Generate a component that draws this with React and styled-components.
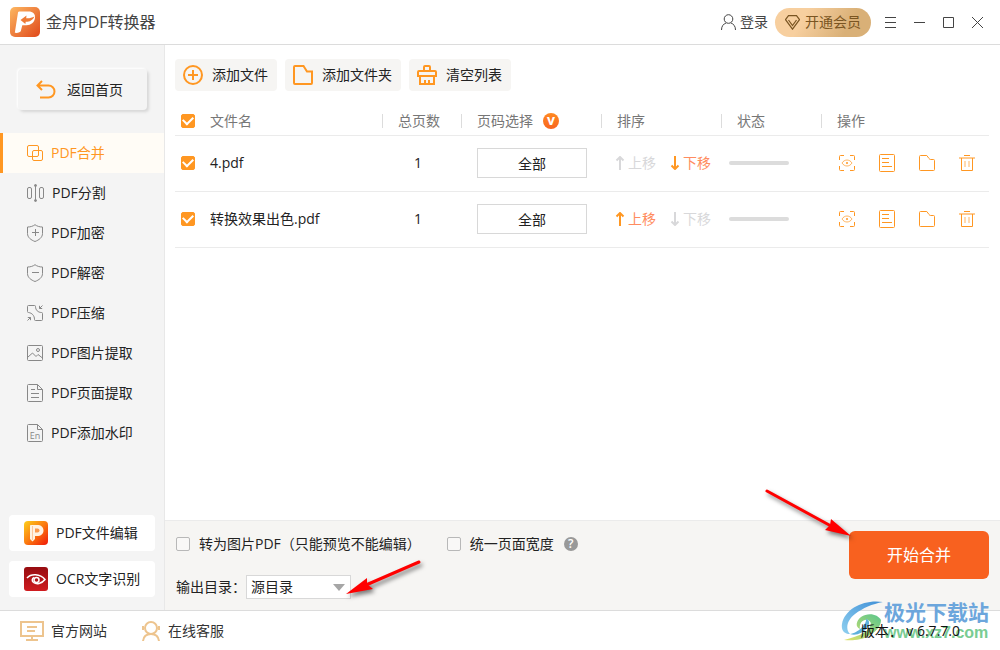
import React, { useState } from 'react';
import styled, { createGlobalStyle } from 'styled-components';

const GlobalStyle = createGlobalStyle`
  * {
    box-sizing: border-box;
  }

  body {
    margin: 0;
    background: #fff;
  }

  body, button, input, select {
    font-family: "Open Sans", "Noto Sans CJK SC", sans-serif;
    font-size: 14px;
    line-height: 20px;
    color: #222;
  }

  button {
    padding: 0;
    border: none;
    background: none;
    cursor: pointer;
  }

  svg {
    display: block;
    flex-shrink: 0;
  }
`;

const Window = styled.div`
  display: flex;
  flex-direction: column;
  min-height: 100vh;
`;

// Title bar

const TitleBar = styled.header`
  display: flex;
  align-items: center;
  height: 45px;
  padding: 0 17px 0 10px;
  border-bottom: 1px solid #dcdcdc;
`;

const AppTitle = styled.h1`
  flex: 1;
  margin: 0 0 0 6px;
  font-size: 16px;
  font-weight: 400;
  color: #444;
`;

const LoginButton = styled.button`
  display: flex;
  align-items: center;
  gap: 4px;
  color: #444;
`;

const VipButton = styled.button`
  display: flex;
  align-items: center;
  gap: 5px;
  height: 29px;
  margin: 0 14px 0 7px;
  padding: 0 10px;
  border-radius: 15px;
  background: linear-gradient(120deg, #f7cf9f 30%, #d9b077 75%);
  color: #7a5522;
`;

const WindowControls = styled.div`
  display: flex;
  gap: 18px;
  color: #444;
`;

const IconButton = styled.button`
  display: flex;
  color: inherit;
`;

// Sidebar

const Body = styled.div`
  display: flex;
  flex: 1;
`;

const Sidebar = styled.aside`
  display: flex;
  flex-direction: column;
  justify-content: space-between;
  width: 165px;
  padding-bottom: 13px;
  border-right: 1px solid #e8e8e8;
  background: #f4f4f4;
`;

const BackButton = styled.button`
  display: flex;
  align-items: center;
  gap: 11px;
  width: 129px;
  height: 41px;
  margin: 24px 0 23px 18px;
  padding-left: 18px;
  border-radius: 4px;
  background: #f4f4f4;
  box-shadow: -1px -1px 2px #fff, 2px 2px 3px #d6d6d6;

  svg {
    color: #ff9722;
  }
`;

const MenuItem = styled.button`
  display: flex;
  align-items: center;
  gap: 8px;
  width: 100%;
  height: 40px;
  padding-left: 24px;
  border-left: 3px solid ${({ $active }) => ($active ? '#ff9722' : 'transparent')};
  background: ${({ $active }) => ($active ? '#fffcf6' : 'transparent')};
  color: ${({ $active }) => ($active ? '#ff9722' : '#222')};

  svg {
    color: ${({ $active }) => ($active ? '#ff9722' : '#888')};
  }
`;

const ToolCards = styled.div`
  display: flex;
  flex-direction: column;
  gap: 10px;
  padding: 0 9px;
`;

const ToolCard = styled.button`
  display: flex;
  align-items: center;
  gap: 8px;
  height: 36px;
  padding-left: 15px;
  border-radius: 4px;
  background: #fff;
`;

// File list

const Main = styled.main`
  display: flex;
  flex: 1;
  flex-direction: column;
  min-width: 0;
`;

const FileArea = styled.section`
  flex: 1;
  padding: 14px 11px 0 10px;
`;

const Toolbar = styled.div`
  display: flex;
  gap: 8px;
  margin-bottom: 15px;
`;

const ToolbarButton = styled.button`
  display: flex;
  align-items: center;
  gap: 9px;
  height: 32px;
  padding: 0 9px 0 8px;
  border-radius: 4px;
  background: #f6f5f3;

  svg {
    color: #ff9722;
  }
`;

const FileTable = styled.table`
  width: 100%;
  table-layout: fixed;
  border-collapse: separate;
  border-spacing: 0;

  th, td {
    padding: 0;
    border-bottom: 1px solid #ebebeb;
    text-align: left;
    font-weight: 400;
  }

  th {
    height: 30px;
    color: #777;
  }

  td {
    height: 56px;
    padding-bottom: 2px;
  }
`;

const HeadLabel = styled.div`
  display: flex;
  align-items: center;
  gap: 10px;
  height: 14px;
  padding-left: 15px;
  border-left: 1px solid #dcdcdc;
`;

const VipBadge = styled.span`
  width: 16px;
  height: 16px;
  border-radius: 50%;
  background: linear-gradient(#ff8a22, #f8651f);
  color: #fff;
  font-size: 14px;
  font-weight: 700;
  line-height: 13px;
  text-align: center;
`;

const Checkbox = styled.input.attrs({ type: 'checkbox' })`
  display: grid;
  place-content: center;
  appearance: none;
  width: 14px;
  height: 14px;
  margin: 0;
  border: 1px solid #b8b8b8;
  border-radius: 2px;
  background: #f9f8f7;

  &:checked {
    border-color: #ff9722;
    background: #ff9722;
  }

  &:checked::after {
    content: '';
    width: 8px;
    height: 5px;
    border: solid #fff;
    border-width: 0 0 2px 2px;
    transform: translateY(-1px) rotate(-45deg);
  }
`;

const CheckCell = styled.div`
  padding-left: 6px;
`;

const PageCount = styled.td`
  && {
    padding-right: 7px;
    text-align: center;
  }
`;

const PageRange = styled.input`
  display: block;
  width: 110px;
  height: 30px;
  margin-left: 16px;
  padding: 0;
  border: 1px solid #d8d8d8;
  text-align: center;
`;

const SortButtons = styled.div`
  display: flex;
  gap: 14px;
  padding-left: 14px;
`;

const SortButton = styled.button`
  display: flex;
  align-items: center;
  gap: 3px;
  color: #ff8c60;

  svg {
    color: #ff9722;
  }

  &:disabled, &:disabled svg {
    color: #d8d8da;
    cursor: default;
  }
`;

const Progress = styled.div`
  width: 60px;
  height: 4px;
  margin-left: 8px;
  border-radius: 2px;
  background: #dcdcdc;
`;

const Actions = styled.div`
  display: flex;
  align-items: center;
  gap: 24px;
  padding-left: 18px;
  color: #ff9722;
`;

// Output settings

const OutputPanel = styled.section`
  display: flex;
  justify-content: space-between;
  padding: 10px 11px 11px;
  border-top: 1px solid #ebebeb;
  background: #f6f5f3;
`;

const Settings = styled.div`
  display: flex;
  flex-direction: column;
  gap: 18px;
`;

const SettingsRow = styled.div`
  display: flex;
  align-items: center;
  min-height: ${({ $height }) => $height}px;
`;

const CheckLabel = styled.label`
  display: flex;
  align-items: center;
  gap: 9px;
  margin-right: 26px;

  &:last-of-type {
    margin-right: 10px;
  }
`;

const HelpButton = styled.button`
  width: 14px;
  height: 14px;
  border-radius: 50%;
  background: #999;
  color: #fff;
  font-size: 12px;
  font-weight: 600;
  line-height: 14px;
`;

const SelectBox = styled.div`
  position: relative;
`;

const DirSelect = styled.select`
  display: block;
  appearance: none;
  width: 105px;
  height: 24px;
  padding: 0 20px 0 4px;
  border: 1px solid #d8d8d8;
  border-radius: 0;
  background: #fff;
`;

const SelectArrow = styled.svg`
  position: absolute;
  top: 9px;
  right: 6px;
  pointer-events: none;
`;

const StartBox = styled.div`
  position: relative;
`;

const StartButton = styled.button`
  width: 140px;
  height: 48px;
  border-radius: 6px;
  background: #f8611f;
  color: #fff;
  font-size: 16px;
`;

const Pointer = styled.svg`
  position: absolute;
  top: ${({ $top }) => $top}px;
  left: ${({ $left }) => $left}px;
  overflow: visible;
  pointer-events: none;
  filter: drop-shadow(2px 3px 2px rgba(0, 0, 0, 0.5));
`;

// Status bar

const StatusBar = styled.footer`
  position: relative;
  display: flex;
  align-items: center;
  height: 40px;
  padding: 0 40px 0 20px;
  border-top: 1px solid #dcdcdc;
`;

const FooterLink = styled.a`
  display: flex;
  align-items: center;
  gap: 7px;
  margin-right: 34px;
  color: #333;
  text-decoration: none;
`;

const Version = styled.span`
  position: relative;
  margin-left: auto;
  color: #111;
`;

const SiteMark = styled.div`
  position: absolute;
  right: 11px;
  bottom: 8px;
  display: flex;
  align-items: center;
`;

const SiteName = styled.div`
  color: #6ca6dc;
  font-size: 21px;
  font-weight: 700;
  line-height: 24px;
`;

const SiteUrl = styled.div`
  color: #78cc92;
  font-family: "Liberation Sans", sans-serif;
  font-size: 16px;
  font-weight: 700;
  line-height: 18px;
`;

const Icon = ({ w = 16, h = 16, sw = 1, children }) => (
  <svg width={w} height={h} viewBox={`0 0 ${w} ${h}`} fill="none" stroke="currentColor" strokeWidth={sw} aria-hidden="true">
    {children}
  </svg>
);

const SHIELD = 'M8 .7C6 2.2 3.5 3 .5 3v6.5c0 4 3.5 6.5 7.5 8 4-1.5 7.5-4 7.5-8V3C12.5 3 10 2.2 8 .7z';
const SHEET = 'M10.5.5h-9a1 1 0 0 0-1 1v15a1 1 0 0 0 1 1h13a1 1 0 0 0 1-1v-11zV5.5h5';

const menu = [
  {
    name: 'PDF合并',
    icon: <Icon><rect x=".5" y=".5" width="11" height="11" rx="1.5" /><rect x="5.5" y="5.5" width="10" height="10" rx="1.5" /></Icon>,
  },
  {
    name: 'PDF分割',
    icon: (
      <Icon w={17} h={18}>
        <rect x=".5" y="3.5" width="4" height="11" rx="1.5" />
        <rect x="12.5" y="3.5" width="4" height="11" rx="1.5" />
        <path d="M8.5 1v16" />
        <circle cx="8.5" cy="1.5" r="1" fill="currentColor" />
        <circle cx="8.5" cy="16.5" r="1" fill="currentColor" />
      </Icon>
    ),
  },
  { name: 'PDF加密', icon: <Icon h={18}><path d={SHIELD} /><path d="M5 8.500h7M8.500 5v7" /></Icon> },
  { name: 'PDF解密', icon: <Icon h={18}><path d={SHIELD} /><path d="M5 8.500h7" /></Icon> },
  {
    name: 'PDF压缩',
    icon: (
      <Icon>
        <path d="M.5 6V1.500a1 1 0 0 1 1-1h6a1 1 0 0 1 1 1C8.500 5 11 7.500 14.500 7.500a1 1 0 0 1 1 1v6a1 1 0 0 1-1 1h-6a1 1 0 0 1-1-1C7.500 10.500 5 8 1.500 7.500a1 1 0 0 1-1-1.500z" />
        <path d="M15.500.5l-3 3M12.500.8v2.700h2.700M.5 15.500l3-3M.8 12.500h2.700v2.700" />
      </Icon>
    ),
  },
  {
    name: 'PDF图片提取',
    icon: (
      <Icon>
        <rect x=".5" y=".5" width="15" height="15" rx="1" />
        <circle cx="11" cy="5" r="1.5" />
        <path d="M1 12l4.500-4L9 11.500l2-2 4.500 3.500" />
      </Icon>
    ),
  },
  { name: 'PDF页面提取', icon: <Icon h={18}><path d={SHEET} /><path d="M4 5.500h4M4 9.500h8M4 13.500h8" /></Icon> },
  {
    name: 'PDF添加水印',
    icon: (
      <Icon h={18}>
        <path d={SHEET} />
        <text x="8" y="15" textAnchor="middle" fontSize="9" fill="currentColor" stroke="none">En</text>
      </Icon>
    ),
  },
];

const AppLogo = () => (
  <svg width="30" height="30" viewBox="0 0 30 30" aria-hidden="true">
    <defs>
      <linearGradient id="appLogo" x1="0" y1="0" x2="1" y2="1">
        <stop offset="0" stopColor="#fdb862" />
        <stop offset="1" stopColor="#e0481a" />
      </linearGradient>
    </defs>
    <rect width="30" height="30" rx="5" fill="url(#appLogo)" />
    <path d="M8 5.500C8.300 4.700 8.800 4.500 9.500 4.500h9c4.500 0 7 2.500 6.500 6.500-.6 4.500-4 7.200-8.500 7.200h-4.200L10.800 24c-.3 1.200-2.800 2.200-6 1.800z" fill="#fff" />
    <path d="M10.500 13l6-4.500-.3 2.700c2.500.3 5.500-.2 8.300-1.700-1.800 4-5.400 5.500-8.800 5.300l-.3 2.200z" fill="#ee7a35" />
  </svg>
);

const EditorLogo = () => (
  <svg width="24" height="24" viewBox="0 0 24 24" aria-hidden="true">
    <defs>
      <linearGradient id="editorLogo" x1="0" y1="0" x2="1" y2="1">
        <stop offset="0" stopColor="#fdd01c" />
        <stop offset=".5" stopColor="#fb7a10" />
        <stop offset="1" stopColor="#f01808" />
      </linearGradient>
    </defs>
    <rect width="24" height="24" rx="4" fill="url(#editorLogo)" />
    <path d="M6 5c0-.7.5-1 1-1h6c4 0 6.500 2 6.500 5.500S17 15 13 15h-2v3L8.500 20.500 6 18z" fill="#fff3e4" />
    <path d="M11 7.500h2.500a2 2 0 0 1 0 4H11z" fill="#fb9a50" />
    <path d="M8.500 5v14" stroke="#fbc9a0" />
  </svg>
);

const OcrLogo = () => (
  <svg width="24" height="24" viewBox="0 0 24 24" fill="none" stroke="#fff" aria-hidden="true">
    <defs>
      <linearGradient id="ocrLogo" x1="0" y1="0" x2="0" y2="1">
        <stop offset="0" stopColor="#960c10" />
        <stop offset="1" stopColor="#d01c20" />
      </linearGradient>
    </defs>
    <rect width="24" height="24" rx="3" fill="url(#ocrLogo)" stroke="none" />
    <path d="M3 11c4-4.500 13-4.500 18 1.500-3.500 4.500-8.500 5-11.500 3-2-1.500-1.500-4 .5-5" strokeWidth="1.5" />
    <circle cx="12.5" cy="13" r="2.500" strokeWidth="1.5" />
  </svg>
);

const SortArrow = ({ down }) => (
  <Icon w={10} h={14} sw={2}>
    <path d={down ? 'M5 0v13M1.500 9.500L5 13l3.500-3.500' : 'M5 14V1M1.500 4.500L5 1l3.500 3.500'} />
  </Icon>
);

const initialFiles = [
  { name: '4.pdf', pages: 1 },
  { name: '转换效果出色.pdf', pages: 1 },
];

const FileRow = ({ file, first, last, onMove }) => (
  <tr>
    <td><CheckCell><Checkbox defaultChecked aria-label={file.name} /></CheckCell></td>
    <td>{file.name}</td>
    <PageCount>{file.pages}</PageCount>
    <td><PageRange type="text" defaultValue="全部" aria-label="页码选择" /></td>
    <td>
      <SortButtons>
        <SortButton disabled={first} onClick={() => onMove(-1)}><SortArrow />上移</SortButton>
        <SortButton disabled={last} onClick={() => onMove(1)}><SortArrow down />下移</SortButton>
      </SortButtons>
    </td>
    <td><Progress role="progressbar" aria-label="状态" aria-valuenow={0} /></td>
    <td>
      <Actions>
        <IconButton aria-label="预览">
          <Icon>
            <path d="M.5 5V1.500a1 1 0 0 1 1-1H5M11 .5h3.500a1 1 0 0 1 1 1V5M15.500 11v3.500a1 1 0 0 1-1 1H11M5 15.500H1.500a1 1 0 0 1-1-1V11" />
            <path d="M3 8c2.500-4 7.500-4 10 0-2.500 4-7.500 4-10 0z" opacity=".7" />
            <circle cx="8" cy="8" r="1" fill="currentColor" stroke="none" />
          </Icon>
        </IconButton>
        <IconButton aria-label="详情">
          <Icon h={18}><rect x=".5" y=".5" width="15" height="17" rx="1" /><path d="M3 4.500h7M3 8.500h7M3 12.500h10" /></Icon>
        </IconButton>
        <IconButton aria-label="打开文件夹">
          <Icon><path d="M1.500.5h6.300L10 3.500q.7 1 1.700 1h2.800a1 1 0 0 1 1 1v9a1 1 0 0 1-1 1h-13a1 1 0 0 1-1-1v-13a1 1 0 0 1 1-1z" /></Icon>
        </IconButton>
        <IconButton aria-label="删除">
          <Icon><path d="M5 .5h6M0 3h16M2.500 3v12.500h11V3" /><path d="M6 6v6M10 6v6" opacity=".7" /></Icon>
        </IconButton>
      </Actions>
    </td>
  </tr>
);

const App = () => {
  const [active, setActive] = useState('PDF合并');
  const [files, setFiles] = useState(initialFiles);

  const moveFile = (index, step) => {
    const next = [...files];
    [next[index], next[index + step]] = [next[index + step], next[index]];
    setFiles(next);
  };

  return (
    <Window>
      <GlobalStyle />
      <TitleBar>
        <AppLogo />
        <AppTitle>金舟PDF转换器</AppTitle>
        <LoginButton>
          <Icon w={15}><circle cx="7.5" cy="5" r="4.300" /><path d="M.5 16c0-4 2-6 4.500-7M14.500 16c0-4-2-6-4.500-7" /></Icon>
          登录
        </LoginButton>
        <VipButton>
          <Icon w={15} h={15}>
            <path d="M3.500.7h8l3 4-7 9.500-7-9.500z" strokeWidth="1.2" />
            <path d="M3.500 5l4 5.500 4-5.500" strokeWidth="1.2" />
          </Icon>
          开通会员
        </VipButton>
        <WindowControls>
          <IconButton aria-label="菜单"><Icon w={11} h={11}><path d="M0 .5h11M0 5.500h11M0 10.500h11" /></Icon></IconButton>
          <IconButton aria-label="最小化"><Icon w={11} h={11}><path d="M0 5.500h11" /></Icon></IconButton>
          <IconButton aria-label="最大化"><Icon w={11} h={11}><path d="M.5.5h10v10H.5z" /></Icon></IconButton>
          <IconButton aria-label="关闭"><Icon w={11} h={11}><path d="M0 0l11 11M11 0L0 11" /></Icon></IconButton>
        </WindowControls>
      </TitleBar>

      <Body>
        <Sidebar>
          <nav>
            <BackButton>
              <Icon w={20} h={19} sw={2}><path d="M6 1L1.500 5.500 6 10M2 5.500h10.500a6 6 0 0 1 0 12H4" /></Icon>
              返回首页
            </BackButton>
            {menu.map(item => (
              <MenuItem key={item.name} $active={item.name === active} onClick={() => setActive(item.name)}>
                {item.icon}
                {item.name}
              </MenuItem>
            ))}
          </nav>
          <ToolCards>
            <ToolCard><EditorLogo />PDF文件编辑</ToolCard>
            <ToolCard><OcrLogo />OCR文字识别</ToolCard>
          </ToolCards>
        </Sidebar>

        <Main>
          <FileArea>
            <Toolbar>
              <ToolbarButton>
                <Icon w={20} h={20} sw={2}><circle cx="10" cy="10" r="9" /><path d="M5 10h10M10 5v10" /></Icon>
                添加文件
              </ToolbarButton>
              <ToolbarButton>
                <Icon w={20} h={20} sw={2}><path d="M2 1h8.500l3.500 5.500h5V18a1 1 0 0 1-1 1H2a1 1 0 0 1-1-1V2a1 1 0 0 1 1-1z" /></Icon>
                添加文件夹
              </ToolbarButton>
              <ToolbarButton>
                <Icon w={20} h={20} sw={2}>
                  <path d="M7 6V2a1 1 0 0 1 1-1h4a1 1 0 0 1 1 1v4M2 6h16a1 1 0 0 1 1 1v4H1V7a1 1 0 0 1 1-1zM3 11v8h14v-8M8 15v4M12 15v4" />
                </Icon>
                清空列表
              </ToolbarButton>
            </Toolbar>
            <FileTable>
              <colgroup>
                <col width="35" />
                <col />
                <col width="79" />
                <col width="140" />
                <col width="120" />
                <col width="100" />
                <col width="168" />
              </colgroup>
              <thead>
                <tr>
                  <th><CheckCell><Checkbox defaultChecked aria-label="全选" /></CheckCell></th>
                  <th>文件名</th>
                  <th><HeadLabel>总页数</HeadLabel></th>
                  <th><HeadLabel>页码选择<VipBadge>v</VipBadge></HeadLabel></th>
                  <th><HeadLabel>排序</HeadLabel></th>
                  <th><HeadLabel>状态</HeadLabel></th>
                  <th><HeadLabel>操作</HeadLabel></th>
                </tr>
              </thead>
              <tbody>
                {files.map((file, i) => (
                  <FileRow
                    key={file.name}
                    file={file}
                    first={i === 0}
                    last={i === files.length - 1}
                    onMove={step => moveFile(i, step)}
                  />
                ))}
              </tbody>
            </FileTable>
          </FileArea>

          <OutputPanel>
            <Settings>
              <SettingsRow $height={26}>
                <CheckLabel><Checkbox />转为图片PDF（只能预览不能编辑）</CheckLabel>
                <CheckLabel><Checkbox />统一页面宽度</CheckLabel>
                <HelpButton aria-label="帮助">?</HelpButton>
              </SettingsRow>
              <SettingsRow $height={24}>
                <label htmlFor="outputDir">输出目录：</label>
                <SelectBox>
                  <DirSelect id="outputDir">
                    <option>源目录</option>
                  </DirSelect>
                  <SelectArrow width="12" height="7" viewBox="0 0 12 7"><path d="M0 0h12L6 7z" fill="#a6a6a6" /></SelectArrow>
                  <Pointer $top={-16} $left={100} width="76" height="36" viewBox="0 0 76 36">
                    <path d="M73 3L20 26" stroke="#f00" strokeWidth="3" strokeLinecap="round" />
                    <path d="M0 35L21 19l0 6 6 5z" fill="#f00" />
                  </Pointer>
                </SelectBox>
              </SettingsRow>
            </Settings>
            <StartBox>
              <StartButton>开始合并</StartButton>
              <Pointer $top={-43} $left={-85} width="88" height="50" viewBox="0 0 88 50">
                <path d="M3 3l64 35" stroke="#f00" strokeWidth="3" strokeLinecap="round" />
                <path d="M87 48L67 31l-1 6-5 5z" fill="#f00" />
              </Pointer>
            </StartBox>
          </OutputPanel>
        </Main>
      </Body>

      <StatusBar>
        <FooterLink href="#site">
          <svg width="24" height="20" viewBox="0 0 24 20" fill="none" stroke="#edc48e" strokeWidth="2" aria-hidden="true">
            <path d="M1 1h22v14H1zM7 6h10M7 10h8M12 15v4M6 19h12" />
          </svg>
          官方网站
        </FooterLink>
        <FooterLink href="#service">
          <svg width="20" height="20" viewBox="0 0 20 20" fill="none" stroke="#edc48e" strokeWidth="2" aria-hidden="true">
            <circle cx="10" cy="7" r="6" />
            <path d="M2 5v4M18 5v4M2 20c.5-4.500 3.500-7 8-7s7.500 2.500 8 7" />
          </svg>
          在线客服
        </FooterLink>
        <SiteMark>
          <svg width="44" height="42" viewBox="0 0 42 42" aria-hidden="true">
            <defs>
              <linearGradient id="swirl" x1="0" y1="1" x2="1" y2="0">
                <stop offset="0" stopColor="#8fd0f0" />
                <stop offset="1" stopColor="#3f8fd6" />
              </linearGradient>
              <linearGradient id="leaf" x1="0" y1="1" x2="1" y2="0">
                <stop offset="0" stopColor="#e3e36a" />
                <stop offset="1" stopColor="#58c58c" />
              </linearGradient>
            </defs>
            <path d="M42 2C24-1 4 8 1 24c-1 6 2 10 8 10-5-5-3-14 5-20C22 8 31 4 42 2z" fill="url(#swirl)" />
            <path d="M3 40c8 1 18 0 24-4 8-4 13-10 13-16-3-6-13-8-20-3-5 4-6 10-1 12-1-6 3-10 8-9 5 2 3 8-3 12-6 4-14 6-21 8z" fill="url(#leaf)" />
            <path d="M9 34c6 2 13-1 17-6 3-4 3-8-1-9 1 5-8 14-16 15z" fill="#5eb0dc" />
          </svg>
          <div>
            <SiteName>极光下载站</SiteName>
            <SiteUrl>www.xz7.com</SiteUrl>
          </div>
        </SiteMark>
        <Version>版本： v 6.7.7.0</Version>
      </StatusBar>
    </Window>
  );
};

export default App;
